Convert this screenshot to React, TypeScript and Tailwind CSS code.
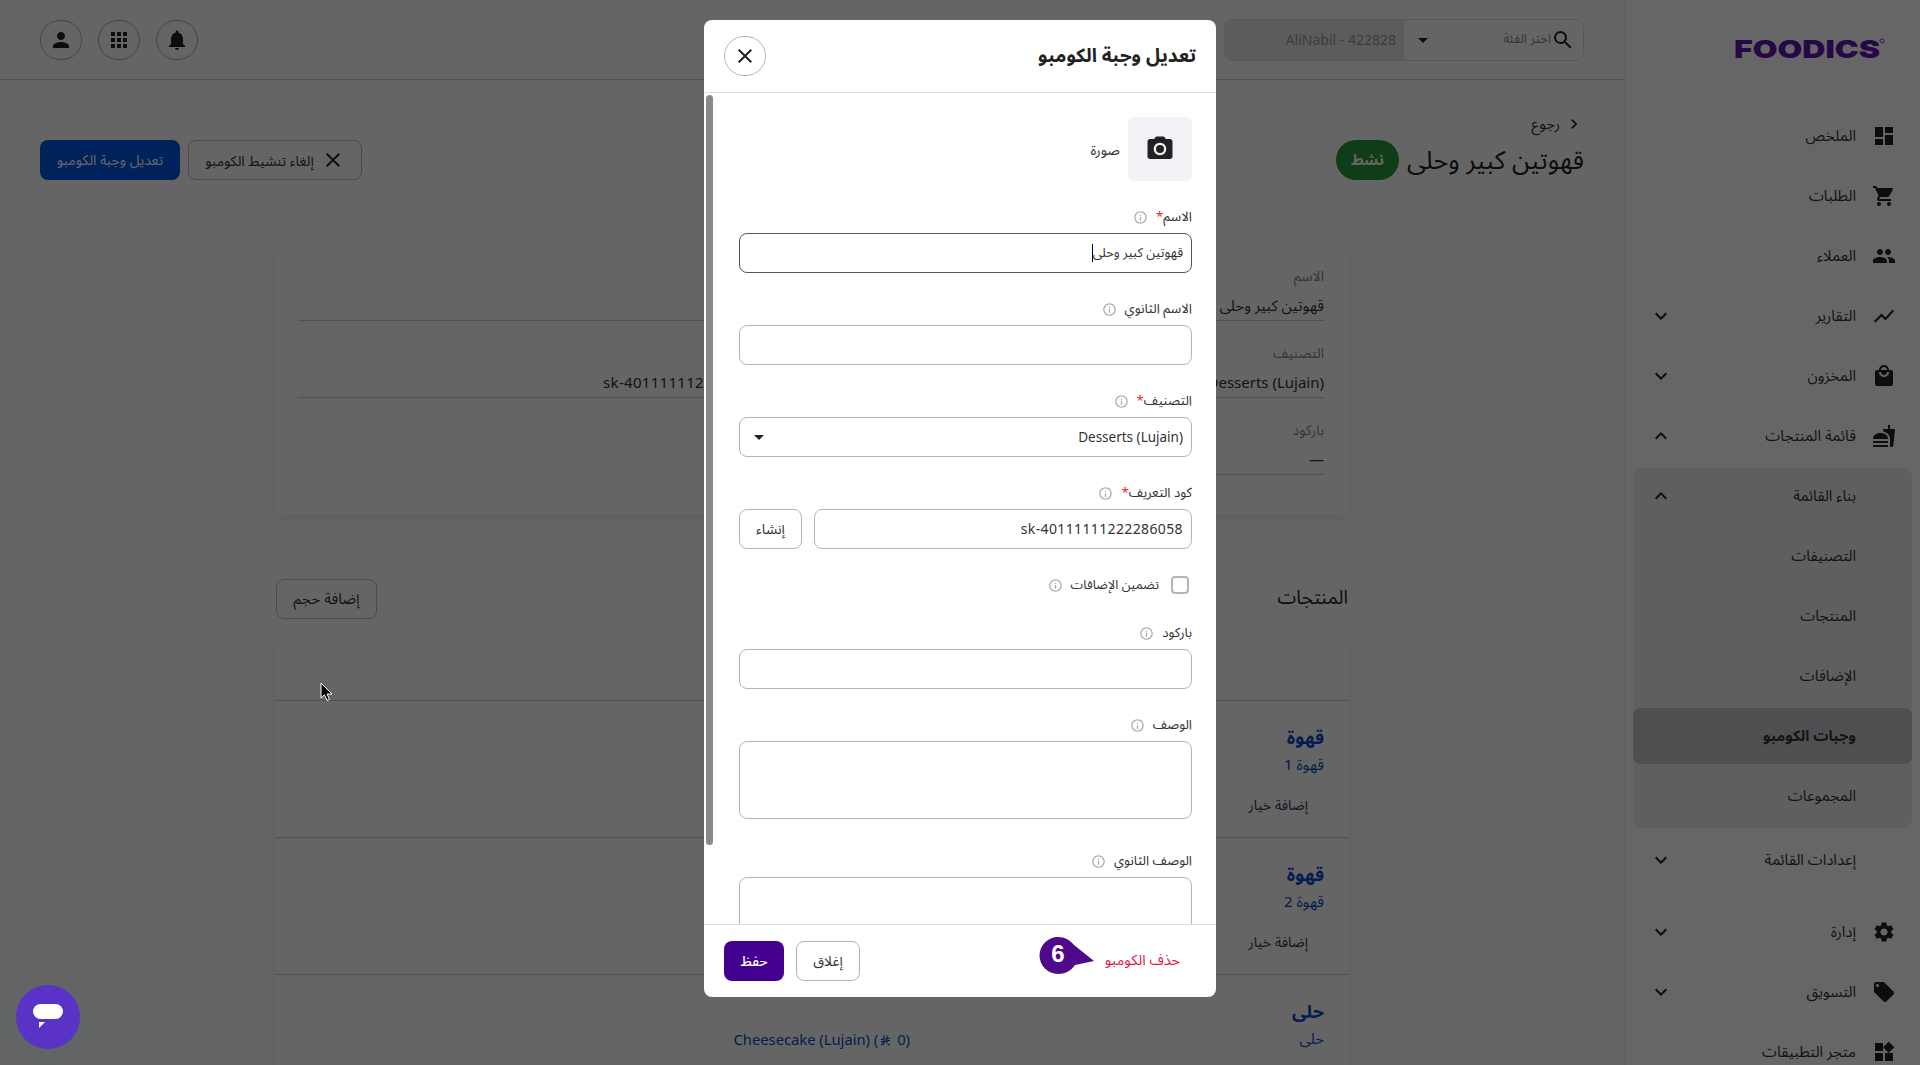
import type { ReactNode } from "react";
import {
  MdApps,
  MdArrowDropDown,
  MdChevronRight,
  MdClose,
  MdDashboard,
  MdExpandLess,
  MdExpandMore,
  MdFastfood,
  MdInfoOutline,
  MdLocalMall,
  MdLocalOffer,
  MdNotifications,
  MdPeople,
  MdPerson,
  MdPhotoCamera,
  MdSearch,
  MdSettings,
  MdShoppingCart,
  MdShowChart,
  MdWidgets,
} from "react-icons/md";

const font = "font-['Noto_Sans','Noto_Sans_Arabic','DejaVu_Sans',sans-serif]";

function FoodicsLogo() {
  return (
    <svg width="150" height="28" viewBox="0 0 150 28" className="block overflow-visible">
      <text
        x="-2"
        y="23"
        textLength="146"
        lengthAdjust="spacingAndGlyphs"
        fill="#5f14b0"
        fontFamily="Inter, sans-serif"
        fontWeight="900"
        fontSize="25"
      >
        FOODICS
      </text>
      <circle cx="146" cy="6" r="2" fill="none" stroke="#5f14b0" strokeWidth="0.8" />
    </svg>
  );
}

function RiyalSign() {
  return (
    <svg width="11" height="11" viewBox="0 0 11 11" className="mx-[2px] inline-block align-[-1px]">
      <path d="M4 0.5 V9 L1 9.6 M7 0.5 V8.5 M0.8 4.6 L10 3 M0.8 7 L10 5.4 M7.6 10 L10.2 9.4" fill="none" stroke="currentColor" strokeWidth="1.1" />
    </svg>
  );
}

function NavRow({
  label,
  icon,
  arrow,
  active,
  className = "",
}: {
  label: string;
  icon?: ReactNode;
  arrow?: "up" | "down";
  active?: boolean;
  className?: string;
}) {
  return (
    <div
      className={`flex h-14 shrink-0 items-center rounded-lg text-[15px] text-[#333] ${
        active ? "bg-[#c6c6ca] font-bold" : ""
      } ${className}`}
    >
      <div className="flex w-[56px] shrink-0 justify-center text-[#222]">{icon}</div>
      <span className="flex-1 pb-[2px]">{label}</span>
      <div className="ml-4 text-[#222]">
        {arrow === "up" && <MdExpandLess size={24} />}
        {arrow === "down" && <MdExpandMore size={24} />}
      </div>
    </div>
  );
}

function Sidebar() {
  return (
    <aside className="flex h-screen w-[296px] shrink-0 flex-col overflow-hidden border-l border-[#eee] bg-white px-2">
      <div className="flex h-[108px] shrink-0 justify-end pt-[35px] pr-[26px]" dir="ltr">
        <FoodicsLogo />
      </div>
      <div className="flex flex-col gap-1">
        <NavRow label="الملخص" icon={<MdDashboard size={24} />} />
        <NavRow label="الطلبات" icon={<MdShoppingCart size={24} />} />
        <NavRow label="العملاء" icon={<MdPeople size={24} />} />
        <NavRow label="التقارير" icon={<MdShowChart size={24} />} arrow="down" />
        <NavRow label="المخزون" icon={<MdLocalMall size={24} />} arrow="down" />
        <NavRow label="قائمة المنتجات" icon={<MdFastfood size={24} />} arrow="up" />
        <div className="flex flex-col gap-1 rounded-lg bg-[#eeeef1] pb-1">
          <NavRow label="بناء القائمة" arrow="up" />
          <NavRow label="التصنيفات" />
          <NavRow label="المنتجات" />
          <NavRow label="الإضافات" />
          <NavRow label="وجبات الكومبو" active />
          <NavRow label="المجموعات" />
        </div>
        <NavRow label="إعدادات القائمة" arrow="down" />
        <NavRow label="إدارة" icon={<MdSettings size={24} />} arrow="down" className="mt-3" />
        <NavRow label="التسويق" icon={<MdLocalOffer size={24} />} arrow="down" />
        <NavRow label="متجر التطبيقات" icon={<MdWidgets size={24} />} />
      </div>
    </aside>
  );
}

function RoundIcon({ children }: { children: ReactNode }) {
  return (
    <div className="flex h-10 w-[42px] items-center justify-center rounded-full border border-[#aaa] text-[#222]">
      {children}
    </div>
  );
}

function TopBar() {
  return (
    <header className="flex h-20 shrink-0 items-center justify-between border-b border-[#ccc] px-10">
      <div className="flex h-[42px] w-[360px] overflow-hidden rounded-lg border border-[#ddd]">
        <div className="flex w-[180px] items-center pr-2 pl-[7px] text-[#222]">
          <MdSearch size={24} />
          <span className="flex-1 pb-[2px] text-[13px] text-[#888]">اختر الفئة</span>
          <MdArrowDropDown size={24} />
        </div>
        <div className="flex w-[180px] items-center bg-[#e6e6e6] pr-2 text-[14px] text-[#999]">AliNabil - 422828</div>
      </div>
      <div className="flex gap-4">
        <RoundIcon>
          <MdNotifications size={24} />
        </RoundIcon>
        <RoundIcon>
          <MdApps size={24} />
        </RoundIcon>
        <RoundIcon>
          <MdPerson size={24} />
        </RoundIcon>
      </div>
    </header>
  );
}

function DetailField({ label, value, className = "" }: { label: string; value: string; className?: string }) {
  return (
    <div className="border-b border-[#ccc] pb-[3px]">
      <div className="text-[14px] leading-6 text-[#888]">{label}</div>
      <div className={`mt-[5px] text-[15px] leading-6 text-[#333] ${className}`}>{value}</div>
    </div>
  );
}

function ProductRow({
  title,
  sub,
  option,
  children,
}: {
  title: string;
  sub: string;
  option?: string;
  children?: ReactNode;
}) {
  return (
    <div className="flex h-[137px] border-t border-[#ccc] pt-[22px] pr-6">
      <div className="w-[414px] shrink-0">
        <div className="text-[18px] leading-7 font-bold text-[#084bc4]">{title}</div>
        <div className="mt-[3px] text-[15px] leading-5 text-[#084bc4]">{sub}</div>
        {option && <div className="mt-[21px] mr-4 text-[14px] leading-5 text-[#2a3a55]">{option}</div>}
      </div>
      {children}
    </div>
  );
}

function Page() {
  return (
    <main className="flex h-screen min-w-0 flex-1 flex-col overflow-hidden bg-[#fdfdfd]">
      <TopBar />
      <div className="px-10 pt-[34px]">
        <div className="flex h-5 items-center gap-1 text-[15px] text-[#333]">
          <MdChevronRight size={20} className="text-[#222]" />
          <span className="pb-[2px]">رجوع</span>
        </div>
        <div className="mt-[6px] flex h-10 items-center justify-between">
          <div className="flex items-center gap-2">
            <h1 className="pb-[2px] text-[25.5px] leading-10 font-normal text-[#222]">قهوتين كبير وحلى</h1>
            <span className="flex h-10 w-[63px] items-center justify-center rounded-full bg-[#26993c] pb-[2px] text-[15px] font-bold text-white">
              نشط
            </span>
          </div>
          <div className="flex gap-2">
            <div className="flex h-10 w-[174px] items-center justify-center gap-[7px] rounded-lg border border-[#bbb] text-[14px] text-[#333]">
              <MdClose size={24} className="text-[#222]" />
              <span>إلغاء تنشيط الكومبو</span>
            </div>
            <div className="flex h-10 w-[140px] items-center justify-center rounded-lg bg-[#0055e1] pb-[2px] text-[14px] text-white">
              تعديل وجبة الكومبو
            </div>
          </div>
        </div>
      </div>

      <div className="mx-auto mt-16 w-[1072px]">
        <section className="rounded-lg pt-5 pr-6 pb-10 pl-[22px] shadow-[0_2px_12px_rgba(0,0,0,0.08)]">
          <div className="grid grid-cols-2 gap-x-[72px] gap-y-5">
            <DetailField label="الاسم" value="قهوتين كبير وحلى" />
            <DetailField label="الاسم الثانوي" value="—" />
            <DetailField label="التصنيف" value="Desserts (Lujain)" />
            <DetailField label="كود التعريف" value="sk-40111111222286058" className="tracking-[0.3px]" />
            <DetailField label="باركود" value="—" />
          </div>
        </section>

        <div className="mt-16 flex h-10 items-center justify-between">
          <h2 className="pb-1 text-[19px] text-[#222]">المنتجات</h2>
          <div className="flex h-10 w-[101px] items-center justify-center rounded-lg border border-[#bbb] pb-[2px] text-[15px] text-[#333]">
            إضافة حجم
          </div>
        </div>

        <section className="mt-[18px] rounded-lg shadow-[0_2px_12px_rgba(0,0,0,0.08)]">
          <div className="h-[63px]" />
          <ProductRow title="قهوة" sub="قهوة 1" option="إضافة خيار" />
          <ProductRow title="قهوة" sub="قهوة 2" option="إضافة خيار" />
          <ProductRow title="حلى" sub="حلى">
            <div className="mt-[32px] h-5 text-[14.75px] leading-5 text-[#084bc4]" dir="ltr">
              Cheesecake (Lujain) (<RiyalSign /> 0)
            </div>
          </ProductRow>
        </section>
      </div>
    </main>
  );
}

function FieldLabel({ text, required }: { text: string; required?: boolean }) {
  return (
    <div className="mb-2 flex h-5 items-center gap-2 pt-1 text-[13.25px] text-[#333]">
      <span>
        {text}
        {required && <span className="text-[#ee1c25]">*</span>}
      </span>
      <MdInfoOutline size={15} className="text-[#aaa]" />
    </div>
  );
}

const inputClass = "h-10 w-full rounded-lg border border-[#b5b5b5] px-2 text-[#333] outline-none";

function Modal() {
  return (
    <div className="relative mt-5 flex h-[977px] w-[512px] flex-col overflow-hidden rounded-lg bg-white">
      <div className="flex h-[73px] shrink-0 items-center justify-between border-b border-[#d8deec] px-5">
        <h3 className="pb-[2px] text-[19px] font-bold text-[#222]">تعديل وجبة الكومبو</h3>
        <div className="flex h-10 w-[42px] items-center justify-center rounded-full border border-[#b5b5b5] text-[#222]">
          <MdClose size={24} />
        </div>
      </div>

      <div className="relative min-h-0 flex-1 overflow-hidden pt-6 pr-6 pl-[35px]">
        <div className="absolute top-[2px] left-[2px] h-[750px] w-[7px] rounded bg-[#8a8a8a]" />

        <div className="mb-6 flex items-center gap-2 text-[14px] text-[#333]">
          <div className="flex h-16 w-16 items-center justify-center rounded-md bg-[#f1f1f6] text-[#222]">
            <MdPhotoCamera size={30} />
          </div>
          <span>صورة</span>
        </div>

        <FieldLabel text="الاسم" required />
        <div className="mb-6 flex h-10 items-center rounded-lg border border-[#555] px-2 text-[13px] text-[#333]">
          <span>قهوتين كبير وحلى</span>
          <span className="h-[18px] w-px bg-black" />
        </div>

        <FieldLabel text="الاسم الثانوي" />
        <input readOnly className={`${inputClass} mb-6 block text-[14px]`} />

        <FieldLabel text="التصنيف" required />
        <div className={`${inputClass} mb-6 flex items-center justify-between text-[13.5px]`}>
          <span>Desserts (Lujain)</span>
          <MdArrowDropDown size={24} className="-ml-px text-[#222]" />
        </div>

        <FieldLabel text="كود التعريف" required />
        <div className="mb-6 flex gap-3">
          <input
            readOnly
            value="sk-40111111222286058"
            dir="rtl"
            className={`${inputClass} flex-1 pb-[2px] text-[14px] tracking-[0.37px]`}
          />
          <div className="flex h-10 w-[63px] shrink-0 items-center justify-center rounded-lg border border-[#b5b5b5] pb-[2px] text-[14px] text-[#333]">
            إنشاء
          </div>
        </div>

        <div className="mb-6 flex h-6 items-center gap-2 pr-[3px] text-[12.75px] text-[#333]">
          <div className="h-[18px] w-[18px] rounded-sm border-2 border-[#b5b5b5]" />
          <span className="mr-1">تضمين الإضافات</span>
          <MdInfoOutline size={15} className="text-[#aaa]" />
        </div>

        <FieldLabel text="باركود" />
        <input readOnly className={`${inputClass} mb-6 block text-[14px]`} />

        <FieldLabel text="الوصف" />
        <div className="mb-[30px] h-[78px] rounded-lg border border-[#b5b5b5]" />

        <FieldLabel text="الوصف الثانوي" />
        <div className="h-[78px] rounded-lg border border-[#b5b5b5]" />
      </div>

      <div className="relative flex h-[73px] shrink-0 items-center justify-between border-t border-[#dadaf0] px-5">
        <div className="mr-4 pb-[2px] text-[14.5px] text-[#e5173f]">حذف الكومبو</div>
        <div className="flex gap-3">
          <div className="flex h-10 w-16 items-center justify-center rounded-lg border border-[#b5b5b5] pb-[2px] text-[14px] text-[#333]">
            إغلاق
          </div>
          <div className="flex h-10 w-[60px] items-center justify-center rounded-lg bg-[#43008f] pb-[2px] text-[14px] font-medium text-white">
            حفظ
          </div>
        </div>

        {/* tutorial marker */}
        <div className="absolute top-[11px] left-[335px] h-[40px] w-[56px]" dir="ltr">
          <svg width="56" height="40" viewBox="0 0 56 40" className="absolute inset-0">
            <path d="M19 1 C26 1 31 4 35 9 L55 25 L36 29 C32 35 26 38 19 38 A18.5 18.5 0 0 1 19 1 Z" fill="#4f0a8c" />
          </svg>
          <span className="absolute top-0 left-[9px] w-5 text-center font-['Liberation_Sans',sans-serif] text-[24px] leading-[36px] font-bold text-white">
            6
          </span>
        </div>
      </div>
    </div>
  );
}

export default function App() {
  return (
    <div dir="rtl" className={`relative flex h-screen overflow-hidden bg-white ${font}`}>
      <Sidebar />
      <Page />

      {/* backdrop + dialog */}
      <div className="absolute inset-0 flex justify-center bg-black/60">
        <Modal />
      </div>

      {/* chat bubble */}
      <div className="absolute bottom-4 left-4 flex h-16 w-16 items-center justify-center rounded-full bg-[#5a32c8] shadow-[0_4px_24px_rgba(60,120,100,0.25)]">
        <svg width="32" height="26" viewBox="0 0 32 26">
          <rect x="1" y="0" width="30" height="15" rx="7.5" fill="#fff" />
          <path d="M7 18 L13 18 L7 24 Z" fill="#fff" />
        </svg>
      </div>

      {/* mouse pointer */}
      <svg width="14" height="21" viewBox="0 0 14 21" className="absolute top-[682px] left-[320px]">
        <path d="M1 1 L1 16 L4.5 12.8 L7 18.5 L9.5 17.4 L7 12 L12 12 Z" fill="#000" stroke="#fff" strokeWidth="1" />
      </svg>
    </div>
  );
}
